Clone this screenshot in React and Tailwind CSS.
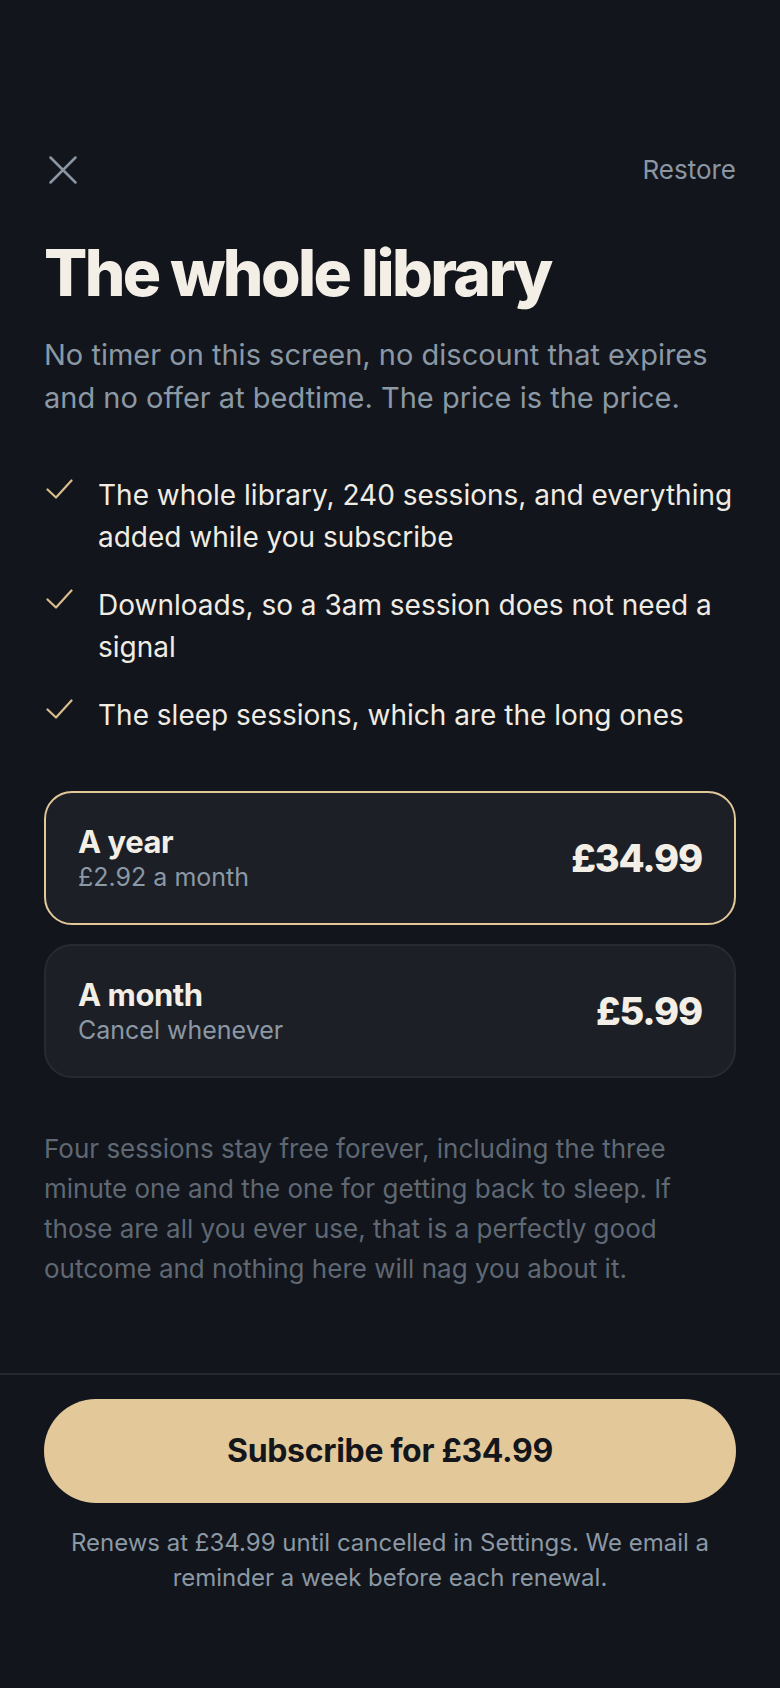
const features = [
  'The whole library, 240 sessions, and everything added while you subscribe',
  'Downloads, so a 3am session does not need a signal',
  'The sleep sessions, which are the long ones',
]

const plans = [
  { id: 'year', name: 'A year', note: '£2.92 a month', price: '£34.99', selected: true },
  { id: 'month', name: 'A month', note: 'Cancel whenever', price: '£5.99', selected: false },
]

const CloseIcon = () => (
  <svg width="28" height="28" viewBox="0 0 28 28" fill="none" stroke="currentColor" strokeWidth="2.5" strokeLinecap="round">
    <path d="M1.5 1.5L26.5 26.5M26.5 1.5L1.5 26.5" />
  </svg>
)

const CheckMark = () => (
  <svg width="27" height="20" viewBox="0 0 27 20" fill="none" stroke="currentColor" strokeWidth="2.2" strokeLinecap="round" strokeLinejoin="round" className="shrink-0 mt-[5px] text-[#d9bd8c]">
    <polyline points="1.5,10.5 10,18.5 25.5,1.5" />
  </svg>
)

const Paywall = () => {
  return (
    <div className="h-[1688px] w-full bg-[#12151b] flex flex-col font-['Inter',sans-serif]">
      <main className="flex-1 px-[44px] pt-[156px]">
        <div className="h-[28px] flex items-center justify-between">
          <button className="ml-[5px] text-[#8a96a3]">
            <CloseIcon />
          </button>
          <button className="text-[26px] leading-[28px] text-[#8a96a3]">Restore</button>
        </div>

        <h1 className="mt-[53px] text-[64px] leading-[72px] font-extrabold tracking-[-0.04em] text-[#f3efe6]">
          The whole library
        </h1>
        <p className="mt-[24px] text-[29px] leading-[43px] text-[#8b98a5]">
          No timer on this screen, no discount that expires and no offer at bedtime. The price is the price.
        </p>

        <ul className="mt-[55px] flex flex-col gap-[26px]">
          {features.map((f) => (
            <li key={f} className="flex items-start gap-[25px] ml-[2px]">
              <CheckMark />
              <span className="text-[28px] leading-[42px] text-[#f0ece4]">{f}</span>
            </li>
          ))}
        </ul>

        <div className="mt-[55px] flex flex-col gap-[19px]">
          {plans.map((p) => (
            <div
              key={p.id}
              className={`h-[134px] rounded-[28px] bg-[#1c1f26] px-[32px] flex items-center justify-between border-2 ${
                p.selected ? 'border-[#e2c899]' : 'border-[#262b33]'
              }`}
            >
              <div className="flex flex-col">
                <span className="text-[31px] leading-[38px] font-bold tracking-[-0.015em] text-[#f3efe6]">{p.name}</span>
                <span className="text-[25px] leading-[32px] text-[#8b98a5]">{p.note}</span>
              </div>
              <span className="text-[38px] font-extrabold tracking-[-0.03em] text-[#f3efe6]">{p.price}</span>
            </div>
          ))}
        </div>

        <p className="mt-[51px] text-[26px] leading-[40px] text-[#5f6873]">
          Four sessions stay free forever, including the three minute one and the one for getting back to sleep. If those are all you ever use, that is a perfectly good outcome and nothing here will nag you about it.
        </p>
      </main>

      <footer className="border-t-2 border-[#232830] px-[44px] pt-[24px] pb-[93px]">
        <button className="w-full h-[104px] rounded-full bg-[#e3c899] text-[32px] font-bold tracking-[-0.01em] text-[#14161b]">
          Subscribe for £34.99
        </button>
        <p className="mt-[22px] text-center text-[24px] leading-[35px] text-[#8b98a5]">
          Renews at £34.99 until cancelled in Settings. We email a reminder a week before each renewal.
        </p>
      </footer>
    </div>
  )
}

export default Paywall
